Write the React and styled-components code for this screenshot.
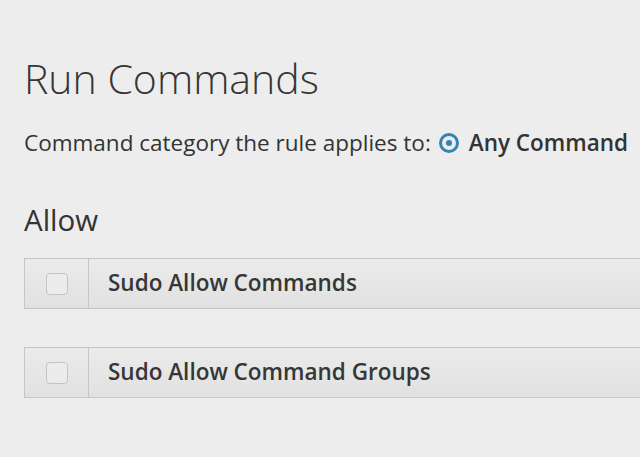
import React from "react";
import styled, { createGlobalStyle } from "styled-components";

const GlobalStyle = createGlobalStyle`
  html, body {
    margin: 0;
    padding: 0;
    background: #ededed;
    font-family: "Open Sans", "Liberation Sans", sans-serif;
    color: #333;
    overflow: hidden;
  }
`;

const Page = styled.div`
  width: 640px;
  height: 457px;
  padding: 50px 0 0 24px;
  box-sizing: border-box;
  overflow: hidden;
`;

const Title = styled.h1`
  margin: 0;
  font-size: 41px;
  font-weight: 300;
  line-height: 56px;
  color: #363636;
  white-space: nowrap;
`;

const CategoryLine = styled.div`
  display: flex;
  align-items: center;
  margin-top: 22px;
  font-size: 22.5px;
  line-height: 30px;
  color: #333;
  white-space: nowrap;
`;

const Radio = styled.span`
  display: inline-block;
  width: 20px;
  height: 20px;
  margin: 0 10px 0 8px;
  border-radius: 50%;
  border: 3px solid #3483b6;
  box-sizing: border-box;
  position: relative;
  &::after {
    content: "";
    position: absolute;
    left: 50%;
    top: 50%;
    width: 6px;
    height: 6px;
    margin: -3px 0 0 -3px;
    border-radius: 50%;
    background: #3483b6;
  }
`;

const Choice = styled.span`
  font-weight: 600;
  color: #333;
`;

const Section = styled.h2`
  margin: 42px 0 0;
  font-size: 29.5px;
  font-weight: 400;
  line-height: 40px;
  color: #333;
`;

const Table = styled.div`
  display: flex;
  width: 640px;
  height: 51px;
  margin-top: ${({ $gap }) => $gap}px;
  border: 1px solid #c6c6c6;
  border-right: none;
  box-sizing: border-box;
  background: linear-gradient(180deg, #ebebeb 0%, #e1e1e1 100%);
`;

const CheckCell = styled.div`
  flex: 0 0 63px;
  display: flex;
  align-items: center;
  justify-content: center;
  border-right: 1px solid #c6c6c6;
`;

const Checkbox = styled.span`
  width: 22px;
  height: 22px;
  box-sizing: border-box;
  border: 1px solid #c4c4c4;
  border-radius: 4px;
  background: #ececec;
`;

const HeadCell = styled.div`
  flex: 1;
  display: flex;
  align-items: center;
  padding: 0 0 3px 19px;
  font-size: 22.5px;
  font-weight: 600;
  color: #363636;
  white-space: nowrap;
`;

const Row = ({ label, gap }) => (
  <Table $gap={gap}>
    <CheckCell>
      <Checkbox />
    </CheckCell>
    <HeadCell>{label}</HeadCell>
  </Table>
);

export default function App() {
  return (
    <>
      <GlobalStyle />
      <Page>
        <Title>Run Commands</Title>
        <CategoryLine>
          Command category the rule applies to:
          <Radio />
          <Choice>Any Command</Choice>
        </CategoryLine>
        <Section>Allow</Section>
        <Row label="Sudo Allow Commands" gap={18} />
        <Row label="Sudo Allow Command Groups" gap={38} />
      </Page>
    </>
  );
}
